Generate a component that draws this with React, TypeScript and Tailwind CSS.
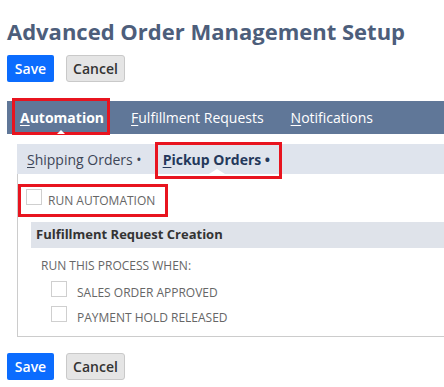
import React from 'react';

const font = { fontFamily: '"Open Sans", "Liberation Sans", sans-serif' };

// Save / Cancel pair used at the top and bottom of the page
function ActionButtons() {
    return (
        <div className="flex gap-3 pl-[7px]">
            <button className="h-[27px] w-[47px] rounded-[2px] bg-[#0b6cfe] text-[14px] font-semibold text-white">
                Save
            </button>
            <button className="h-[27px] w-[59px] rounded-[3px] border border-[#c9c9c9] bg-[#e5e5e5] text-[14px] font-semibold text-[#333]">
                Cancel
            </button>
        </div>
    );
}

// Red annotation frame drawn over a highlighted element
function Highlight({ className }: { className: string }) {
    return <span className={`pointer-events-none absolute border-[3px] border-[#e8141f] ${className}`} />;
}

function Checkbox() {
    return <span className="block h-4 w-4 shrink-0 border border-[#cfcfcf] bg-white" />;
}

export default function App() {
    return (
        <div className="h-[387px] w-[444px] overflow-hidden bg-white" style={font}>
            <h1 className="pl-[7px] pt-[15px] text-[22px] font-bold leading-[32px] text-[#4d5e7b]">
                Advanced Order Management Setup
            </h1>

            <div className="mt-2">
                <ActionButtons />
            </div>

            {/* Main tabs */}
            <div className="ml-[7px] mt-[19px] flex h-[33px] items-center bg-[#607798] text-[14px] text-white">
                <div className="relative ml-[13px] flex h-full items-center font-bold">
                    <span>
                        <span className="underline underline-offset-2">A</span>utomation
                    </span>
                    <Highlight className="-left-2 -right-[6px] -top-[3px] -bottom-[1px]" />
                    <span className="absolute bottom-0 left-[37px] h-0 w-0 border-x-[4px] border-b-[4px] border-x-transparent border-b-white" />
                </div>
                <span className="ml-[27px]">
                    <span className="underline underline-offset-2">F</span>ulfillment Requests
                </span>
                <span className="ml-[27px]">
                    <span className="underline underline-offset-2">N</span>otifications
                </span>
            </div>

            {/* Sub tabs */}
            <div className="ml-[17px] mt-[10px] flex h-[30px] items-center bg-[#dfe4ed] text-[14px]">
                <span className="ml-[10px] text-[#3d4657]">
                    <span className="underline underline-offset-2">S</span>hipping Orders •
                </span>
                <div className="relative ml-[21px] flex h-full items-center font-bold text-[#24385b]">
                    <span>
                        <span className="underline underline-offset-2">P</span>ickup Orders •
                    </span>
                    <Highlight className="-left-2 -right-3 -top-[2px] -bottom-[5px]" />
                    <span className="absolute bottom-0 left-[46px] h-0 w-0 border-x-[8px] border-b-[5px] border-x-transparent border-b-white" />
                </div>
            </div>

            {/* Pickup orders panel */}
            <div className="ml-[17px] h-[163px] border-b border-l border-[#cccccc] pt-[15px]">
                <div className="relative ml-[8px] flex w-fit items-start gap-[6px] text-[12px] leading-[18px] text-[#666]">
                    <Checkbox />
                    <span className="pt-[3px]">RUN AUTOMATION</span>
                    <Highlight className="-left-2 -right-[13px] -top-[5px] -bottom-[7px]" />
                </div>

                <div className="ml-[13px] mt-[12px] flex h-[26px] items-center bg-[#dfe3ea] pl-[5px] text-[13px] font-bold text-[#333]">
                    Fulfillment Request Creation
                </div>

                <div className="ml-[23px] mt-[9px] text-[12px] leading-[18px] text-[#666]">RUN THIS PROCESS WHEN:</div>
                <div className="ml-[33px] mt-[6px] flex flex-col gap-[4px] text-[12px] leading-[18px] text-[#666]">
                    <div className="flex items-start gap-[10px]">
                        <Checkbox />
                        <span className="pt-[3px]">SALES ORDER APPROVED</span>
                    </div>
                    <div className="flex items-start gap-[10px]">
                        <Checkbox />
                        <span className="pt-[3px]">PAYMENT HOLD RELEASED</span>
                    </div>
                </div>
            </div>

            <div className="mt-4">
                <ActionButtons />
            </div>
        </div>
    );
}
